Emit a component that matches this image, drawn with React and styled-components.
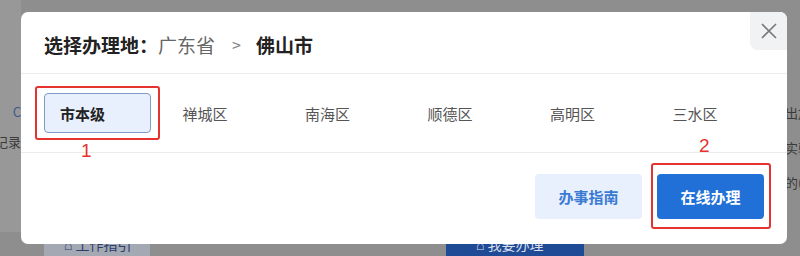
import styled, { createGlobalStyle } from "styled-components";

const GlobalStyle = createGlobalStyle`
  body {
    margin: 0;
    font-family: "Noto Sans CJK SC", "Noto Sans", sans-serif;
  }
`;

const districts = ["市本级", "禅城区", "南海区", "顺德区", "高明区", "三水区"];

const App = () => {
    return (
        <>
            <GlobalStyle />
            <Page>
                <Backdrop>
                    <EdgeColumn $side="left">
                        <EdgeText $color="#3d5a8a">C</EdgeText>
                        <EdgeText>记录</EdgeText>
                    </EdgeColumn>
                    <EdgeColumn $side="right">
                        <EdgeText>出加</EdgeText>
                        <EdgeText>实验</EdgeText>
                        <EdgeText>的(户</EdgeText>
                    </EdgeColumn>
                </Backdrop>
                <BottomBar>
                    <PageAction>⌂ 工作指引</PageAction>
                    <PageAction $primary>⌂ 我要办理</PageAction>
                </BottomBar>

                <Modal>
                    <Header>
                        <Title>
                            选择办理地：<Crumb>广东省</Crumb>
                            <Arrow>&gt;</Arrow>
                            佛山市
                        </Title>
                        <Close aria-label="close">
                            <svg width="20" height="20" viewBox="0 0 20 20">
                                <path d="M3 3 L17 17 M17 3 L3 17" stroke="#777" strokeWidth="1.6" />
                            </svg>
                        </Close>
                    </Header>
                    <Districts>
                        {districts.map((d, i) => (
                            <Chip key={d} $active={i === 0}>
                                {d}
                                {i === 0 && (
                                    <>
                                        <Mark $inset="-8px -10px" />
                                        <MarkNum $left={36} $top={46}>1</MarkNum>
                                    </>
                                )}
                            </Chip>
                        ))}
                    </Districts>
                    <Footer>
                        <Button>办事指南</Button>
                        <Button $primary>
                            在线办理
                            <Mark $inset="-11px -7px -10px -6px" />
                            <MarkNum $left={42} $top={-39}>2</MarkNum>
                        </Button>
                    </Footer>
                </Modal>
            </Page>
        </>
    );
};

const Page = styled.div`
    position: relative;
    width: 800px;
    height: 256px;
    overflow: hidden;
    background: #8e8e8e;
    display: flex;
    flex-direction: column;
`;

const Backdrop = styled.div`
    height: 244px;
    display: flex;
    justify-content: space-between;
`;

const EdgeColumn = styled.div`
    width: ${(p) => (p.$side === "left" ? "21px" : "15px")};
    overflow: hidden;
    display: flex;
    flex-direction: column;
    align-items: ${(p) => (p.$side === "left" ? "flex-end" : "flex-start")};
    padding-top: ${(p) => (p.$side === "left" ? "103px" : "104px")};
    gap: ${(p) => (p.$side === "left" ? "12px" : "17px")};
    background: ${(p) => (p.$side === "left" ? "#989898" : "transparent")};
`;

const EdgeText = styled.span`
    font-size: 13px;
    line-height: 18px;
    color: ${(p) => p.$color || "#3a3a3a"};
    white-space: nowrap;
`;

const BottomBar = styled.div`
    flex: 1;
    display: flex;
    padding-left: 44px;
    gap: 296px;
`;

const PageAction = styled.div`
    width: ${(p) => (p.$primary ? "138px" : "106px")};
    background: ${(p) => (p.$primary ? "#1f4b96" : "#a3a8b3")};
    color: ${(p) => (p.$primary ? "#d8deea" : "#2b3f6e")};
    font-size: 14px;
    padding-left: ${(p) => (p.$primary ? "30px" : "20px")};
    line-height: 24px;
    box-sizing: border-box;
`;

const Modal = styled.div`
    position: absolute;
    left: 21px;
    top: 12px;
    width: 766px;
    height: 232px;
    background: #fff;
    border-radius: 7px;
    display: flex;
    flex-direction: column;
`;

const Header = styled.div`
    height: 61px;
    display: flex;
    align-items: center;
    justify-content: space-between;
    padding-left: 23px;
    border-bottom: 1px solid #ececec;
    position: relative;
`;

const Title = styled.h2`
    margin: 0;
    margin-top: 3px;
    font-size: 19px;
    font-weight: 700;
    color: #222;
    display: flex;
    align-items: center;
`;

const Crumb = styled.span`
    font-weight: 400;
    color: #666;
`;

const Arrow = styled.span`
    font-weight: 400;
    color: #888;
    font-size: 16px;
    margin: 0 15px 0 17px;
`;

const Close = styled.button`
    position: absolute;
    top: 0;
    right: 0;
    width: 37px;
    height: 38px;
    border: none;
    background: #f1f2f4;
    border-radius: 0 7px 0 8px;
    display: flex;
    align-items: center;
    justify-content: center;
    padding: 0;
`;

const Districts = styled.div`
    height: 78px;
    display: flex;
    align-items: center;
    gap: 15.5px;
    padding-left: 23px;
    border-bottom: 1px solid #ececec;
`;

const Chip = styled.div`
    position: relative;
    width: 107px;
    height: 40px;
    box-sizing: border-box;
    display: flex;
    align-items: center;
    padding-left: 15px;
    font-size: 15px;
    border-radius: 4px;
    color: ${(p) => (p.$active ? "#222" : "#555")};
    font-weight: ${(p) => (p.$active ? 700 : 400)};
    background: ${(p) => (p.$active ? "#e8f0fd" : "transparent")};
    border: 1px solid ${(p) => (p.$active ? "#7f9cc4" : "transparent")};
`;

const Mark = styled.span`
    position: absolute;
    inset: ${(p) => p.$inset};
    border: 2px solid #e5332f;
    border-radius: 3px;
    pointer-events: none;
`;

const MarkNum = styled.span`
    position: absolute;
    left: ${(p) => p.$left}px;
    top: ${(p) => p.$top}px;
    color: #e5332f;
    font-family: "Liberation Sans", sans-serif;
    font-size: 19px;
    font-weight: 400;
`;

const Footer = styled.div`
    flex: 1;
    display: flex;
    justify-content: flex-end;
    align-items: center;
    gap: 15px;
    padding-right: 23px;
    padding-bottom: 4px;
`;

const Button = styled.div`
    position: relative;
    width: 107px;
    height: 45px;
    border-radius: 4px;
    display: flex;
    align-items: center;
    justify-content: center;
    font-size: 15px;
    font-weight: 700;
    background: ${(p) => (p.$primary ? "#2170d8" : "#e8f0fd")};
    color: ${(p) => (p.$primary ? "#fff" : "#3b7bd4")};
`;

export default App;
